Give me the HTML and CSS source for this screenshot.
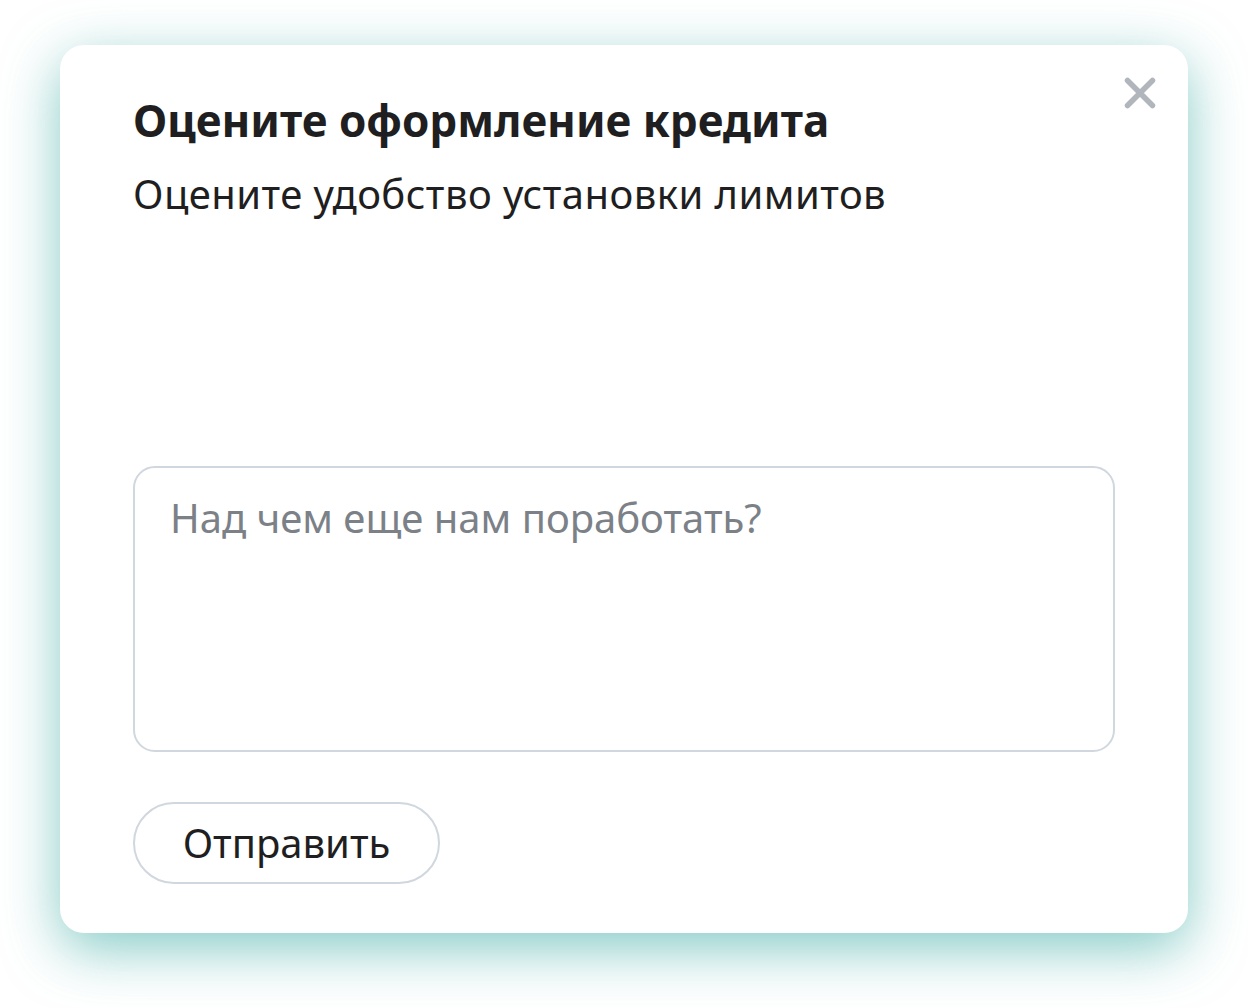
FILE: index.html
```html
<!DOCTYPE html>
<html lang="ru">
<head>
<meta charset="utf-8">
<link rel="stylesheet" href="styles.css">
</head>
<body>
<div class="page">
  <div class="card">
    <button class="close" aria-label="Закрыть">
      <svg width="34" height="34" viewBox="0 0 34 34"><path d="M4.5 4.5 L29.5 29.5 M29.5 4.5 L4.5 29.5" stroke="#b1b5bc" stroke-width="5.5" stroke-linecap="round" fill="none"/></svg>
    </button>
    <h1 class="title">Оцените оформление кредита</h1>
    <p class="subtitle">Оцените удобство установки лимитов</p>
    <div class="spacer"></div>
    <div class="field">
      <div class="placeholder">Над чем еще нам поработать?</div>
    </div>
    <button class="send">Отправить</button>
  </div>
</div>
</body>
</html>
```
FILE: styles.css
```css
html, body {
  margin: 0;
  padding: 0;
  background: #ffffff;
}
body {
  font-family: "Noto Sans", "Open Sans", sans-serif;
  color: #1f1f22;
}
.page {
  box-sizing: border-box;
  min-height: 1008px;
  padding: 45px 60px 0 60px;
}
.card {
  position: relative;
  width: 1128px;
  height: 888px;
  box-sizing: border-box;
  background: #ffffff;
  border-radius: 24px;
  box-shadow: 0 16px 55px rgba(70, 176, 168, 0.66);
  padding: 47px 72px 0 73px;
  display: flex;
  flex-direction: column;
  align-items: flex-start;
}
.close {
  position: absolute;
  top: 31px;
  right: 31px;
  width: 34px;
  height: 34px;
  padding: 0;
  border: 0;
  background: none;
  display: block;
}
.close svg {
  display: block;
}
.title {
  margin: 0;
  font-size: 44px;
  font-weight: 700;
  line-height: 56px;
  color: #1f1f22;
}
.subtitle {
  margin: 20px 0 0 0;
  font-size: 40px;
  font-weight: 400;
  line-height: 52px;
  letter-spacing: 0.45px;
  color: #1f1f22;
}
.spacer {
  height: 246px;
}
.field {
  width: 982px;
  height: 286px;
  box-sizing: border-box;
  border: 2px solid #d1d7de;
  border-radius: 22px;
  padding: 24px 35px;
}
.placeholder {
  font-size: 40px;
  line-height: 52px;
  color: #7c8188;
}
.send {
  margin-top: 50px;
  width: 307px;
  height: 82px;
  box-sizing: border-box;
  border: 2px solid #d1d7de;
  border-radius: 41px;
  background: #ffffff;
  font-family: "Noto Sans", "Open Sans", sans-serif;
  font-size: 40px;
  line-height: 52px;
  color: #1f1f22;
  padding: 0;
}
```
